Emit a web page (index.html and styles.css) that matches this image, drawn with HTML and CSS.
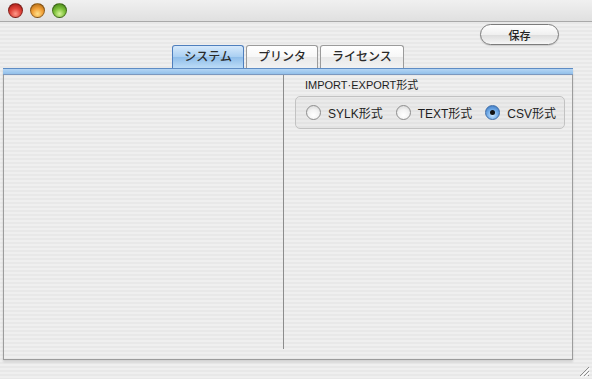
FILE: index.html
```html
<!DOCTYPE html>
<html>
<head>
	<title>設定</title>
	<meta charset="utf-8">
	<link rel="stylesheet" href="styles.css">
</head>
<body>
	<div class="window">
		<div class="titlebar">
			<span class="light red"></span>
			<span class="light orange"></span>
			<span class="light green"></span>
		</div>
		<div class="toolbar">
			<button class="btn">保存</button>
		</div>
		<ul class="tabs">
			<li class="on">システム</li>
			<li>プリンタ</li>
			<li>ライセンス</li>
		</ul>
		<div class="panel">
			<div class="band"></div>
			<div class="content">
				<div class="col-left"></div>
				<div class="col-right">
					<p class="group-title">IMPORT·EXPORT形式</p>
					<div class="group">
						<label class="radio"><span class="dot"></span>SYLK形式</label>
						<label class="radio"><span class="dot"></span>TEXT形式</label>
						<label class="radio"><span class="dot on"></span>CSV形式</label>
					</div>
				</div>
			</div>
		</div>
		<svg class="grip" width="12" height="12" viewBox="0 0 12 12">
			<path d="M11 2 L2 11 M11 6 L6 11 M11 10 L10 11" stroke="#8c8c8c" stroke-width="1"/>
			<path d="M12 3 L3 12 M12 7 L7 12" stroke="#fff" stroke-width="1"/>
		</svg>
	</div>
</body>
</html>
```

FILE: styles.css
```css
*{margin: 0;padding: 0;box-sizing: border-box;}
html,body{width: 592px;height: 379px;overflow: hidden;}
body{font-family: "Liberation Sans", "Noto Sans CJK JP", sans-serif;color: #1e1e1e;}
ul li{list-style: none;}

.window{position: relative;width: 592px;height: 379px;display: flex;flex-direction: column;
	background: repeating-linear-gradient(#efefef 0 2px, #e8e8e8 2px 4px);}

.titlebar{height: 22px;flex: none;display: flex;align-items: center;gap: 7px;padding: 0 0 1px 8px;
	background: linear-gradient(#f0f0f0, #e0e0e0);border-bottom: 1px solid #a9a9a9;}
.light{width: 15px;height: 15px;border-radius: 50%;border: 1px solid rgba(0,0,0,.35);}
.red{background: radial-gradient(circle at 50% 75%, #ff9a8a 0, #e0443a 45%, #9c1410 100%);}
.orange{background: radial-gradient(circle at 50% 75%, #ffe08a 0, #f2a23a 45%, #a35e0a 100%);}
.green{background: radial-gradient(circle at 50% 75%, #d8f59a 0, #7fc23c 45%, #3c7a10 100%);}

.toolbar{height: 23px;flex: none;display: flex;justify-content: flex-end;padding: 2px 33px 0 0;}
.btn{width: 79px;height: 21px;border-radius: 11px;border: 1px solid #7c7c7c;font: 500 11px "Noto Sans CJK JP", sans-serif;color: #222;
	background: linear-gradient(#ffffff, #f0f0f0 50%, #dcdcdc 51%, #f6f6f6);box-shadow: 0 1px 1px rgba(0,0,0,.15);}

.tabs{display: flex;justify-content: center;gap: 2px;height: 23px;flex: none;width: 570px;margin-left: 3px;}
.tabs li{height: 23px;padding: 0 11px;line-height: 22px;font-size: 12px;font-weight: 500;color: #2a2a2a;
	border: 1px solid #9b9b9b;border-bottom: none;border-radius: 3px 3px 0 0;
	background: linear-gradient(#ffffff, #f7f7f7 50%, #e9e9e9 51%, #f2f2f2);}
.tabs .on{border-color: #4f7fbd;background: linear-gradient(#d6e9fb, #a9cff2 50%, #8fbde9 51%, #bcdcf7);}

.panel{width: 570px;height: 292px;margin-left: 3px;flex: none;border: 1px solid #9c9c9c;border-top: none;
	box-shadow: 0 2px 2px rgba(0,0,0,.12);display: flex;flex-direction: column;}
.band{height: 7px;margin: 0 -1px;flex: none;border-top: 1px solid #5e8cc4;border-bottom: 1px solid #7c98be;
	background: linear-gradient(#b4d5f4, #93c0ea);}
.content{flex: 1;display: flex;}
.col-left{width: 280px;margin-bottom: 10px;border-right: 1px solid #8c8c8c;}
.col-right{flex: 1;padding: 3px 7px 0 11px;}
.group-title{font-size: 11px;padding-left: 10px;height: 15px;line-height: 15px;}
.group{margin-top: 3px;height: 33px;border: 1px solid #c2c2c2;border-radius: 5px;display: flex;align-items: center;gap: 13px;padding: 0 0 0 10px;
	background: rgba(0,0,0,.02);}
.radio{display: flex;align-items: center;gap: 7px;font-size: 12px;}
.dot{width: 15px;height: 15px;border-radius: 50%;border: 1px solid #8d8d8d;
	background: radial-gradient(circle at 50% 70%, #ffffff 0, #f2f2f2 50%, #cfcfcf 100%);}
.dot.on{border-color: #3f6ea8;display: flex;align-items: center;justify-content: center;
	background: radial-gradient(circle at 50% 70%, #c9e6ff 0, #6fa9e6 50%, #2e6bb8 100%);}
.dot.on::after{content: "";width: 5px;height: 5px;border-radius: 50%;background: #111;}

.grip{position: absolute;right: 2px;bottom: 2px;}
```
